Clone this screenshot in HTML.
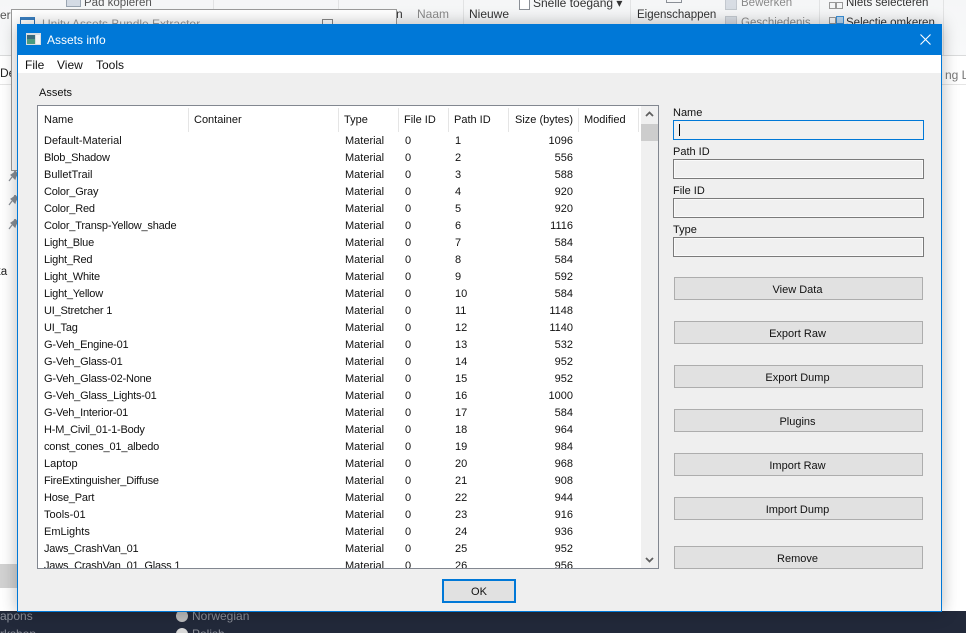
<!DOCTYPE html>
<html><head><meta charset="utf-8"><style>
html,body{margin:0;padding:0;width:966px;height:633px;overflow:hidden;background:#fff;font-family:"Liberation Sans",sans-serif;font-size:11px;color:#111}
.a{position:absolute;white-space:nowrap}
#bg{position:absolute;left:0;top:0;width:966px;height:633px;overflow:hidden}
.t{position:absolute;white-space:nowrap;line-height:14px;height:14px}
#list{position:absolute;left:37px;top:105px;width:620px;height:462px;border:1px solid #828790;background:#fff;overflow:hidden}
.sep{position:absolute;top:2px;height:24px;width:1px;background:#e5e5e5}
.r{position:absolute;left:0;width:600px;height:17px;line-height:17px}
.r span{position:absolute;white-space:nowrap}
.n{left:6px}.ty{left:307px}.f{left:367px}.p{left:417px}
.r .u{letter-spacing:-.2px}
.r .s{left:auto;right:65px}
.l{position:absolute;left:673px;white-space:nowrap;line-height:14px}
.i{position:absolute;left:673px;width:249px;height:18px;border:1px solid #7a7a7a;background:#f0f0f0;box-shadow:inset 0 0 0 1px #fafafa}
.b{position:absolute;left:674px;width:247px;height:21px;border:1px solid #adadad;background:#e1e1e1;text-align:center;line-height:24px;text-indent:-2px}
</style></head><body>
<div id="bg">
<div class="a" style="left:0;top:0;width:966px;height:55px;background:linear-gradient(#f5f6f7,#f8f9fa)"></div>
<div class="a" style="left:0;top:55px;width:966px;height:1px;background:#dadbdc"></div>
<div class="a" style="left:0;top:84px;width:966px;height:1px;background:#e5e5e5"></div>
<div class="a" style="left:213px;top:0;width:1px;height:24px;background:#e2e3e4"></div>
<div class="a" style="left:338px;top:0;width:1px;height:24px;background:#e2e3e4"></div>
<div class="a" style="left:463px;top:0;width:1px;height:24px;background:#e2e3e4"></div>
<div class="a" style="left:630px;top:0;width:1px;height:24px;background:#e2e3e4"></div>
<div class="a" style="left:819px;top:0;width:1px;height:24px;background:#e2e3e4"></div>
<div class="a" style="left:943px;top:0;width:1px;height:55px;background:#e2e3e4"></div>
<div class="t" style="left:0;top:8px;color:#555;font-size:12px">er</div>
<div class="t" style="left:84px;top:-4px;color:#555;font-size:11.5px">Pad kopieren</div>
<div class="a" style="left:66px;top:0;width:13px;height:6px;background:#d4dbe4;border:1px solid #9aa5b1;border-top:0"></div>
<div class="t" style="left:417px;top:7px;color:#8a8a8a;font-size:12px">Naam</div>
<div class="t" style="left:396px;top:7px;color:#333;font-size:12px">n</div>
<div class="t" style="left:469px;top:7px;color:#333;font-size:12px">Nieuwe</div>
<div class="a" style="left:519px;top:-4px;width:9px;height:12px;border:1px solid #8a8f96;background:#fff"></div>
<div class="t" style="left:533px;top:-4px;color:#333;font-size:12px">Snelle toegang ▾</div>
<div class="t" style="left:637px;top:8px;color:#333;font-size:11.5px">Eigenschappen</div>
<div class="a" style="left:666px;top:-6px;width:14px;height:7px;border:1px solid #8a8f96"></div>
<div class="t" style="left:741px;top:-4px;color:#8a8a8a;font-size:11.5px">Bewerken</div>
<div class="a" style="left:725px;top:-1px;width:10px;height:9px;background:#d8dde4;border:1px solid #c3c8cf"></div>
<div class="t" style="left:741px;top:16px;color:#8a8a8a;font-size:11.5px">Geschiedenis</div>
<div class="a" style="left:725px;top:16px;width:10px;height:8px;background:#d8dde4;border:1px solid #c3c8cf"></div>
<div class="t" style="left:846px;top:-4px;color:#333;font-size:11.5px">Niets selecteren</div>
<div class="a" style="left:829px;top:2px;width:5px;height:5px;border:1px solid #999"></div>
<div class="a" style="left:836px;top:2px;width:5px;height:5px;border:1px solid #999"></div>
<div class="t" style="left:846px;top:16px;color:#333;font-size:11.5px">Selectie omkeren</div>
<div class="a" style="left:829px;top:17px;width:5px;height:5px;border:1px solid #999"></div>
<div class="a" style="left:836px;top:16px;width:6px;height:6px;border:1px solid #3a8fd6;background:#b5d6f2"></div>
<div class="t" style="left:0;top:66px;color:#222;font-size:12px">De</div>
<div class="t" style="left:945px;top:68px;color:#777;font-size:12px">ng L</div>
<div class="t" style="left:-5px;top:265px;color:#222;font-size:11.5px">ka</div>
<svg class="a" style="left:8px;top:171px" width="10" height="11" viewBox="0 0 10 11"><path d="M1 10L4 6M3 4l4 4 1-3 2-1-3-4-1 2z" stroke="#8a8f96" stroke-width="1.200" fill="#8a8f96"/></svg>
<svg class="a" style="left:8px;top:195px" width="10" height="11" viewBox="0 0 10 11"><path d="M1 10L4 6M3 4l4 4 1-3 2-1-3-4-1 2z" stroke="#8a8f96" stroke-width="1.200" fill="#8a8f96"/></svg>
<svg class="a" style="left:8px;top:219px" width="10" height="11" viewBox="0 0 10 11"><path d="M1 10L4 6M3 4l4 4 1-3 2-1-3-4-1 2z" stroke="#8a8f96" stroke-width="1.200" fill="#8a8f96"/></svg>
<div class="a" style="left:0;top:564px;width:17px;height:24px;background:#d2d2d2"></div>
<div class="a" style="left:11px;top:9px;width:384px;height:160px;background:#fff;border:1px solid #9b9b9b"></div>
<div class="a" style="left:20px;top:17px;width:13px;height:10px;border:1px solid #2d6fb0;border-top:3px solid #3a7fc0"></div>
<div class="t" style="left:42px;top:17px;color:#999;font-size:12px">Unity Assets Bundle Extractor</div>
<div class="a" style="left:322px;top:19px;width:9px;height:9px;border:1px solid #888"></div>
<div class="a" style="left:0;top:611px;width:966px;height:22px;background:#22293a"></div>
<div class="t" style="left:0;top:609px;color:#8b8f99;font-size:12px">apons</div>
<div class="t" style="left:0;top:627px;color:#8b8f99;font-size:12px">rkshop</div>
<div class="t" style="left:192px;top:609px;color:#8b8f99;font-size:12px">Norwegian</div>
<div class="t" style="left:192px;top:627px;color:#8b8f99;font-size:12px">Polish</div>
<div class="a" style="left:176px;top:610px;width:12px;height:12px;border-radius:50%;background:#bdbdbd"></div>
<div class="a" style="left:176px;top:628px;width:12px;height:12px;border-radius:50%;background:#d8d8d8"></div>
</div>

<div class="a" style="left:17px;top:24px;width:925px;height:588px;box-shadow:0 0 16px rgba(0,0,0,.28)"></div>
<div class="a" style="left:17px;top:24px;width:923px;height:586px;border:1px solid #0078d7;background:#efefef"></div>
<div class="a" style="left:17px;top:24px;width:925px;height:31px;background:#0078d7"></div>
<div class="a" style="left:18px;top:55px;width:923px;height:18px;background:#fff"></div>

<svg class="a" style="left:26px;top:33px" width="15" height="12" viewBox="0 0 15 12"><rect width="15" height="12" fill="#d9dde0"/><rect x="1" y="2" width="8" height="9" fill="#4a9a80"/><rect x="1" y="2" width="8" height="4" fill="#3a6a7a"/><rect x="10" y="2" width="4" height="9" fill="#f4f4f4"/></svg>
<div class="t" style="left:47px;top:33px;color:#fff;font-size:12px">Assets info</div>
<svg class="a" style="left:920px;top:34px" width="11" height="11" viewBox="0 0 11 11"><path d="M.5.5l10 10M10.500.5l-10 10" stroke="#fff" stroke-width="1.100" fill="none"/></svg>

<div class="t" style="left:25px;top:58px;font-size:12px">File</div>
<div class="t" style="left:57px;top:58px;font-size:12px">View</div>
<div class="t" style="left:96px;top:58px;font-size:12px">Tools</div>
<div class="t" style="left:39px;top:86px">Assets</div>

<div id="list">
<div class="sep" style="left:150px"></div><div class="sep" style="left:300px"></div><div class="sep" style="left:360px"></div><div class="sep" style="left:410px"></div><div class="sep" style="left:470px"></div><div class="sep" style="left:540px"></div><div class="sep" style="left:600px"></div>
<div class="t" style="left:6px;top:7px">Name</div>
<div class="t" style="left:156px;top:7px">Container</div>
<div class="t" style="left:306px;top:7px">Type</div>
<div class="t" style="left:366px;top:7px">File ID</div>
<div class="t" style="left:416px;top:7px">Path ID</div>
<div class="t" style="left:477px;top:7px">Size (bytes)</div>
<div class="t" style="left:546px;top:7px">Modified</div>

<div class="r" style="top:27px"><span class="n">Default-Material</span><span class="ty">Material</span><span class="f">0</span><span class="p">1</span><span class="s">1096</span></div>
<div class="r" style="top:44px"><span class="n u">Blob_Shadow</span><span class="ty">Material</span><span class="f">0</span><span class="p">2</span><span class="s">556</span></div>
<div class="r" style="top:61px"><span class="n">BulletTrail</span><span class="ty">Material</span><span class="f">0</span><span class="p">3</span><span class="s">588</span></div>
<div class="r" style="top:78px"><span class="n u">Color_Gray</span><span class="ty">Material</span><span class="f">0</span><span class="p">4</span><span class="s">920</span></div>
<div class="r" style="top:95px"><span class="n u">Color_Red</span><span class="ty">Material</span><span class="f">0</span><span class="p">5</span><span class="s">920</span></div>
<div class="r" style="top:112px"><span class="n u">Color_Transp-Yellow_shade</span><span class="ty">Material</span><span class="f">0</span><span class="p">6</span><span class="s">1116</span></div>
<div class="r" style="top:129px"><span class="n u">Light_Blue</span><span class="ty">Material</span><span class="f">0</span><span class="p">7</span><span class="s">584</span></div>
<div class="r" style="top:146px"><span class="n u">Light_Red</span><span class="ty">Material</span><span class="f">0</span><span class="p">8</span><span class="s">584</span></div>
<div class="r" style="top:163px"><span class="n u">Light_White</span><span class="ty">Material</span><span class="f">0</span><span class="p">9</span><span class="s">592</span></div>
<div class="r" style="top:180px"><span class="n u">Light_Yellow</span><span class="ty">Material</span><span class="f">0</span><span class="p">10</span><span class="s">584</span></div>
<div class="r" style="top:197px"><span class="n u">UI_Stretcher 1</span><span class="ty">Material</span><span class="f">0</span><span class="p">11</span><span class="s">1148</span></div>
<div class="r" style="top:214px"><span class="n u">UI_Tag</span><span class="ty">Material</span><span class="f">0</span><span class="p">12</span><span class="s">1140</span></div>
<div class="r" style="top:231px"><span class="n u">G-Veh_Engine-01</span><span class="ty">Material</span><span class="f">0</span><span class="p">13</span><span class="s">532</span></div>
<div class="r" style="top:248px"><span class="n u">G-Veh_Glass-01</span><span class="ty">Material</span><span class="f">0</span><span class="p">14</span><span class="s">952</span></div>
<div class="r" style="top:265px"><span class="n u">G-Veh_Glass-02-None</span><span class="ty">Material</span><span class="f">0</span><span class="p">15</span><span class="s">952</span></div>
<div class="r" style="top:282px"><span class="n u">G-Veh_Glass_Lights-01</span><span class="ty">Material</span><span class="f">0</span><span class="p">16</span><span class="s">1000</span></div>
<div class="r" style="top:299px"><span class="n u">G-Veh_Interior-01</span><span class="ty">Material</span><span class="f">0</span><span class="p">17</span><span class="s">584</span></div>
<div class="r" style="top:316px"><span class="n u">H-M_Civil_01-1-Body</span><span class="ty">Material</span><span class="f">0</span><span class="p">18</span><span class="s">964</span></div>
<div class="r" style="top:333px"><span class="n u">const_cones_01_albedo</span><span class="ty">Material</span><span class="f">0</span><span class="p">19</span><span class="s">984</span></div>
<div class="r" style="top:350px"><span class="n">Laptop</span><span class="ty">Material</span><span class="f">0</span><span class="p">20</span><span class="s">968</span></div>
<div class="r" style="top:367px"><span class="n u">FireExtinguisher_Diffuse</span><span class="ty">Material</span><span class="f">0</span><span class="p">21</span><span class="s">908</span></div>
<div class="r" style="top:384px"><span class="n u">Hose_Part</span><span class="ty">Material</span><span class="f">0</span><span class="p">22</span><span class="s">944</span></div>
<div class="r" style="top:401px"><span class="n">Tools-01</span><span class="ty">Material</span><span class="f">0</span><span class="p">23</span><span class="s">916</span></div>
<div class="r" style="top:418px"><span class="n">EmLights</span><span class="ty">Material</span><span class="f">0</span><span class="p">24</span><span class="s">936</span></div>
<div class="r" style="top:435px"><span class="n u">Jaws_CrashVan_01</span><span class="ty">Material</span><span class="f">0</span><span class="p">25</span><span class="s">952</span></div>
<div class="r" style="top:452px"><span class="n u">Jaws_CrashVan_01_Glass 1</span><span class="ty">Material</span><span class="f">0</span><span class="p">26</span><span class="s">956</span></div>

<div class="a" style="left:603px;top:0;width:17px;height:462px;background:#f0f0f0"></div>
<div class="a" style="left:603px;top:18px;width:17px;height:17px;background:#cdcdcd"></div>
<svg class="a" style="left:607px;top:5px" width="9" height="6" viewBox="0 0 9 6"><path d="M1 5l3.500-3.500L8 5" stroke="#606060" stroke-width="1.800" fill="none"/></svg>
<svg class="a" style="left:607px;top:451px" width="9" height="6" viewBox="0 0 9 6"><path d="M1 1l3.500 3.500L8 1" stroke="#606060" stroke-width="1.800" fill="none"/></svg>
</div>

<div class="l" style="top:106px">Name</div>
<div class="i" style="top:120px;border-color:#0078d7;box-shadow:none"></div>
<div class="a" style="left:679px;top:124px;width:1px;height:12px;background:#000"></div>
<div class="l" style="top:145px">Path ID</div>
<div class="i" style="top:159px"></div>
<div class="l" style="top:184px">File ID</div>
<div class="i" style="top:198px"></div>
<div class="l" style="top:223px">Type</div>
<div class="i" style="top:237px"></div>

<div class="b" style="top:277px">View Data</div>
<div class="b" style="top:321px">Export Raw</div>
<div class="b" style="top:365px">Export Dump</div>
<div class="b" style="top:409px">Plugins</div>
<div class="b" style="top:453px">Import Raw</div>
<div class="b" style="top:497px">Import Dump</div>
<div class="b" style="top:546px">Remove</div>
<div class="b" style="left:442px;top:579px;width:70px;height:20px;line-height:23px;border:2px solid #0078d7;text-indent:0">OK</div>
</body></html>
